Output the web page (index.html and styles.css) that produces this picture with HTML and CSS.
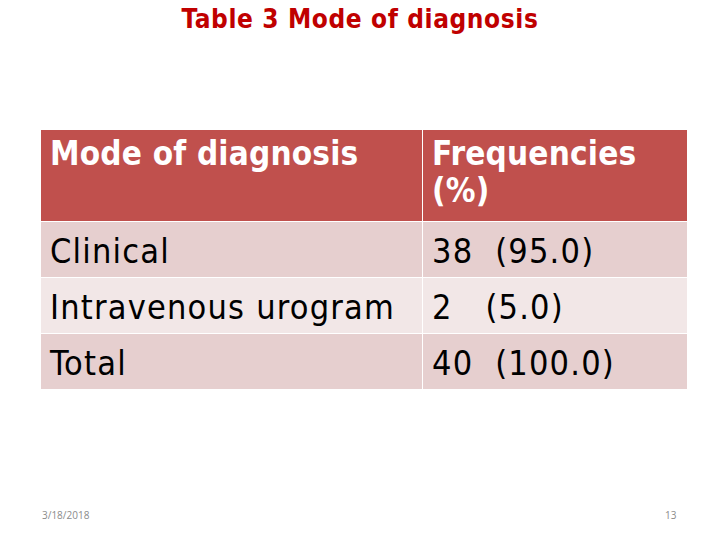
FILE: index.html
```html
<!DOCTYPE html>
<html>
<head>
<meta charset="utf-8">
<link rel="stylesheet" href="styles.css">
</head>
<body>
<div class="slide">
  <h1 class="title">Table 3 Mode of diagnosis</h1>
  <table class="data">
    <thead>
      <tr class="head">
        <th class="c1">Mode of diagnosis</th>
        <th class="c2">Frequencies (%)</th>
      </tr>
    </thead>
    <tbody>
      <tr class="odd"><td>Clinical</td><td>38&nbsp; (95.0)</td></tr>
      <tr class="even"><td>Intravenous urogram</td><td>2&nbsp;&nbsp; (5.0)</td></tr>
      <tr class="odd"><td>Total</td><td>40&nbsp; (100.0)</td></tr>
    </tbody>
  </table>
  <div class="footer">
    <span class="date">3/18/2018</span>
    <span class="page">13</span>
  </div>
</div>
</body>
</html>
```
FILE: styles.css
```css
html, body {
  margin: 0;
  padding: 0;
  background: #ffffff;
}
.slide {
  width: 720px;
  height: 540px;
  position: relative;
  font-family: "DejaVu Sans Condensed", "DejaVu Sans", sans-serif;
}
.title {
  margin: 0;
  padding-top: 4px;
  height: 129px;
  box-sizing: border-box;
  text-align: center;
  font-size: 26px;
  font-weight: bold;
  color: #c00000;
  letter-spacing: 0.6px;
  line-height: 30px;
}
.data {
  width: 648px;
  margin-left: 40px;
  border-collapse: collapse;
  font-size: 34px;
  letter-spacing: 1.2px;
}
.data th, .data td {
  padding: 0 0 0 9px;
  text-align: left;
  vertical-align: top;
  border: 1px solid #ffffff;
  box-sizing: border-box;
}
.data .c1 { width: 382px; }
.head th {
  background: #c0504d;
  color: #ffffff;
  height: 92px;
  padding-top: 5px;
  line-height: 37px;
  font-weight: bold;
  font-size: 33px;
  letter-spacing: 0.2px;
}
.head .c2 { padding-right: 40px; }
.data td {
  height: 56px;
  padding-top: 3px;
  line-height: 52px;
  color: #000000;
}
.odd td { background: #e6cfcf; }
.even td { background: #f2e7e7; }
.footer {
  position: absolute;
  left: 0;
  right: 0;
  top: 508px;
  font-family: "Open Sans", sans-serif;
  font-size: 10px;
  color: #8b8b8b;
}
.date { position: absolute; left: 42px; }
.page { position: absolute; left: 665px; }
```
